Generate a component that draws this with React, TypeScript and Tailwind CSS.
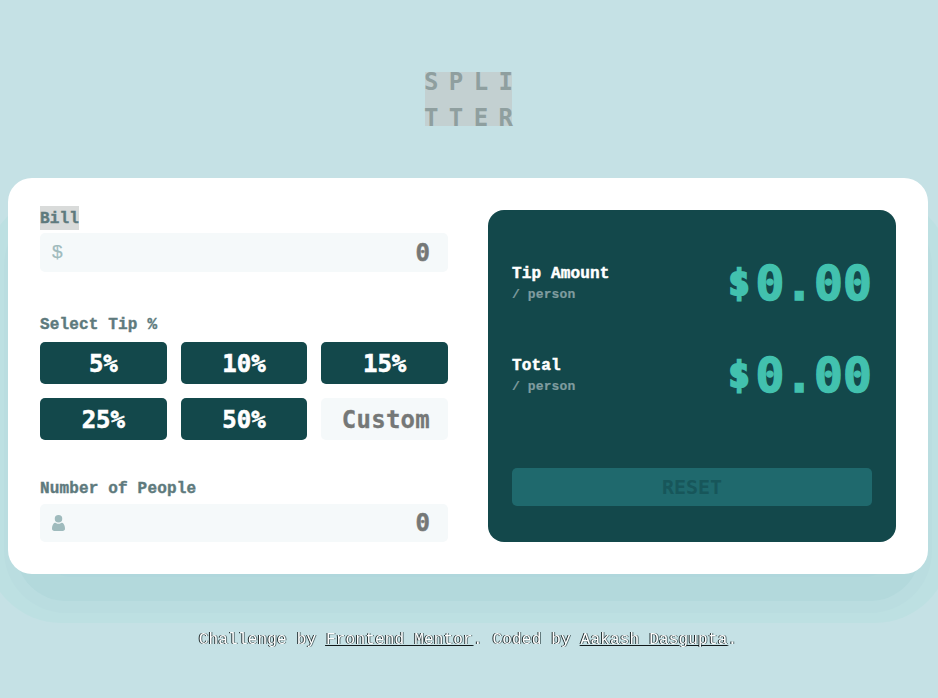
import React from "react";

const label = "text-[16px] leading-6 font-bold text-[#5e7a7d] tracking-[0.16px] [-webkit-text-stroke:0.4px_#5e7a7d]";
const zero = "-mr-px pr-px font-['DejaVu_Sans_Mono'] text-[24px] font-bold text-[#757877] [-webkit-text-stroke:0.5px_#757877]";
const link = "underline decoration-[#101819] decoration-1 underline-offset-[1px]";

function Amount({ title }: { title: string }) {
  return (
    <div className="flex h-[72px] items-center justify-between">
      <div className="pt-[3px]">
        <div className="h-[22px] text-[16px] leading-[22px] font-bold tracking-[0.16px] text-white [-webkit-text-stroke:0.5px_#fff]">{title}</div>
        <div className="h-5 text-[13px] leading-5 font-bold tracking-[0.12px] text-[#7f9c9f] [-webkit-text-stroke:0.2px_#7f9c9f]">/ person</div>
      </div>
      <div className="flex items-center pt-0.5 font-['DejaVu_Sans_Mono'] leading-[72px] font-bold text-[#42c1ae]">
        <span className="w-[27px] text-[35px] tracking-[0.5px] [-webkit-text-stroke:2.4px_#42c1ae]">$</span>
        <span className="-mr-[0.3px] text-[48px] tracking-[0.3px] [-webkit-text-stroke:1.4px_#42c1ae]">0.00</span>
      </div>
    </div>
  );
}

function Tip({ children }: { children: React.ReactNode }) {
  return (
    <button className="flex h-[42px] items-center justify-center rounded-[5px] bg-[#13484b] pt-0.5 font-['DejaVu_Sans_Mono'] text-[24px] leading-none font-bold text-white [-webkit-text-stroke:0.6px_#fff]">
      {children}
    </button>
  );
}

export default function App() {
  return (
    <div className="relative h-[698px] w-[938px] overflow-hidden bg-[#c5e1e5] pr-[10px] pl-2 font-['Liberation_Mono',monospace]">
      <header className="flex h-[178px] pt-[72px] pl-[417px]">
        <div className="h-[54px] w-[87px] bg-[#c3d0d1] font-['DejaVu_Sans_Mono'] text-[24px] font-bold tracking-[10.4px] whitespace-nowrap text-[#8f9f9f]">
          <div className="-mt-2 -ml-px h-9 w-[102px] leading-9">SPLI</div>
          <div className="-ml-px h-9 w-[102px] leading-9">TTER</div>
        </div>
      </header>
      <div className="absolute top-[194px] -right-[12px] -left-[14px] h-[429px] rounded-[75px] bg-[#bde0e2]" />
      <div className="absolute top-[204px] right-1.5 left-1 h-[409px] rounded-[62px] bg-[#badde0]" />
      <div className="absolute top-[220px] right-[18px] left-4 h-[381px] rounded-[50px] bg-[#b3d9dc]" />
      <div className="absolute top-[240px] right-[52px] left-[50px] h-[337px] rounded-[20px] bg-[#b0d7dc]" />
      <main className="relative flex h-[396px] justify-between rounded-[24px] bg-white p-8">
        <section className="-mt-1 w-[408px]">
          <div className={"h-6 " + label}><span className="inline-block h-6 bg-[#d9dbda] leading-[26px]">Bill</span></div>
          <div className="mt-[3px] flex h-[39px] items-center justify-between rounded-[5px] bg-[#f5f9fa] pr-[18px] pl-3">
            <span className="font-['Liberation_Sans'] text-[19px] text-[#9fbbbd] [-webkit-text-stroke:0.2px_#9fbbbd]">$</span>
            <span className={zero}>0</span>
          </div>
          <div className={"mt-[41px] " + label}>Select Tip %</div>
          <div className="mt-[5px] grid grid-cols-3 gap-[14px]">
            <Tip>5%</Tip><Tip>10%</Tip><Tip>15%</Tip><Tip>25%</Tip><Tip>50%</Tip>
            <div className="flex h-[42px] items-center justify-end rounded-[5px] bg-[#f5f9fa] pt-0.5 pr-[18px] font-['DejaVu_Sans_Mono'] text-[24px] font-bold tracking-[0.25px] text-[#757877] [-webkit-text-stroke:0.3px_#757877]">Custom</div>
          </div>
          <div className={"mt-[37px] " + label}>Number of People</div>
          <div className="mt-[3px] flex h-[38px] items-center justify-between rounded-[5px] bg-[#f5f9fa] pr-[18px] pl-3">
            <svg width="13" height="16" viewBox="0 0 13 16" fill="#9fbbbd">
              <path d="M9.573 7.729c.406.007.799.133 1.165.374.43.282.8.688 1.105 1.204.722 1.222 1.157 2.88 1.157 4.425 0 1.24-1.028 2.268-2.268 2.268H2.268C1.028 16 0 14.972 0 13.732c0-1.545.435-3.203 1.157-4.425.305-.516.675-.922 1.105-1.204.366-.241.759-.367 1.165-.374.25.215.568.443.95.633A4.72 4.72 0 0 0 6.5 8.86a4.72 4.72 0 0 0 2.123-.498c.382-.19.7-.418.95-.633ZM6.5 0A3.75 3.75 0 1 1 6.5 7.5 3.75 3.75 0 0 1 6.5 0Z" />
            </svg>
            <span className={zero}>0</span>
          </div>
        </section>
        <section className="flex h-[332px] w-[408px] flex-col rounded-[16px] bg-[#13484b] px-6 pt-9">
          <Amount title="Tip Amount" />
          <div className="h-5" />
          <Amount title="Total" />
          <button className="mt-[58px] h-[38px] rounded-[5px] bg-[#1f696d] font-['DejaVu_Sans_Mono'] text-[20px] leading-[38px] font-bold text-[#17565a]">RESET</button>
        </section>
      </main>
      <footer className="relative mt-[54px] text-center text-[16px] leading-6 tracking-[0.19px] text-white will-change-transform [text-shadow:-1px_0_0_#182426,1px_0_0_#5a7073]">
        Challenge by <a className={link}>Frontend Mentor</a>. Coded by <a className={link}>Aakash Dasgupta</a>.
      </footer>
    </div>
  );
}
